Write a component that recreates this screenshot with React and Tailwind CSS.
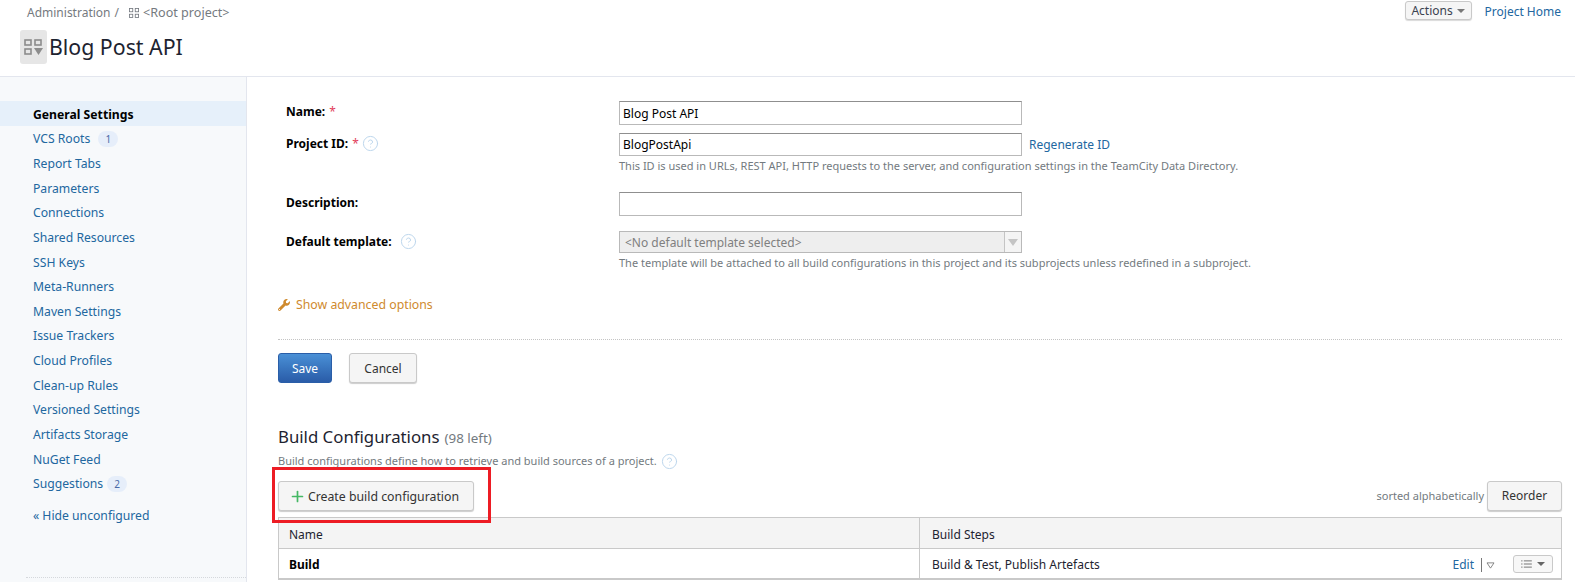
import { CircleHelp, Plus } from "lucide-react";
import { FaWrench } from "react-icons/fa";

const sidebarItems = [
    { label: "General Settings", active: true },
    { label: "VCS Roots", badge: 1, badgeGap: "ml-[8px]" },
    { label: "Report Tabs" },
    { label: "Parameters" },
    { label: "Connections" },
    { label: "Shared Resources" },
    { label: "SSH Keys" },
    { label: "Meta-Runners" },
    { label: "Maven Settings" },
    { label: "Issue Trackers" },
    { label: "Cloud Profiles" },
    { label: "Clean-up Rules" },
    { label: "Versioned Settings" },
    { label: "Artifacts Storage" },
    { label: "NuGet Feed" },
    { label: "Suggestions", badge: 2, badgeGap: "ml-[4px]" },
];

function ProjectIcon({ className }) {
    return (
        <svg viewBox="0 0 12 12" className={className} fill="none" stroke="currentColor" strokeWidth="1">
            <rect x="0.5" y="0.5" width="4" height="4" />
            <rect x="7.5" y="0.5" width="4" height="4" />
            <rect x="0.5" y="7.5" width="4" height="4" />
            <rect x="7.5" y="7.5" width="4" height="4" />
        </svg>
    );
}

function Help({ className = "" }) {
    return <CircleHelp size={17} strokeWidth={1.4} className={`text-[#bcd6ec] ${className}`} />;
}

function FormRow({ label, required, help, helpGap = "ml-[3px]", top, children }) {
    return (
        <div className={`flex ${top}`}>
            <div className="w-[341px] shrink-0 pl-[8px] pt-[2px] flex items-start h-[22px] font-bold text-black">
                <span>{label}:</span>
                {required && <span className="ml-1 font-normal text-[#e2405a]">*</span>}
                {help && <Help className={helpGap} />}
            </div>
            <div className="flex-1">{children}</div>
        </div>
    );
}

function GrayButton({ className = "", children }) {
    return (
        <button className={`flex items-center justify-center rounded-[3px] border border-[#c9c9c9] bg-[#f5f5f5] shadow-[0_1px_1px_rgba(0,0,0,0.2)] text-[#333] ${className}`}>
            {children}
        </button>
    );
}

export default function App() {
    return (
        <div className="w-[1575px] h-[582px] overflow-hidden bg-white text-[12px] leading-[18px] font-['Noto_Sans',sans-serif]">
            {/* Header */}
            <header className="h-[77px] border-b border-[#e3e6ee] flex justify-between">
                <div className="pl-[20px]">
                    <div className="flex items-center h-[25px] pl-[7px] text-[#757a80]">
                        <span>Administration</span>
                        <span className="ml-[4px]">/</span>
                        <ProjectIcon className="ml-[10px] w-[10px] h-[10px]" />
                        <span className="ml-[4px] text-[12.6px]">&lt;Root project&gt;</span>
                    </div>
                    <div className="flex items-center mt-[5px]">
                        <div className="w-[27px] h-[34px] rounded-[3px] bg-[#e6e6e6] flex items-center justify-center">
                            <svg viewBox="0 0 20 16" className="w-[20px] h-[16px] text-[#8c8c8c]" fill="none" stroke="currentColor" strokeWidth="1.6">
                                <rect x="1" y="1" width="6" height="5" />
                                <rect x="11" y="1" width="6" height="5" />
                                <rect x="1" y="10" width="6" height="5" />
                                <path d="M10 9h9l-4.5 7z" fill="currentColor" stroke="none" />
                            </svg>
                        </div>
                        <h1 className="ml-[2px] text-[21.3px] leading-[28px] text-[#1d2330]">Blog Post API</h1>
                    </div>
                </div>
                <div className="flex items-start pr-[14px] pt-[1px]">
                    <button className="flex items-center h-[19px] w-[67px] justify-center rounded-[3px] border border-[#c9c9c9] bg-[#f5f5f5] shadow-[0_1px_1px_rgba(0,0,0,0.15)] text-[#3a4250] pt-[1px]">
                        Actions
                        <span className="ml-[4px] w-0 h-0 border-x-[4px] border-x-transparent border-t-[4px] border-t-[#777]" />
                    </button>
                    <a className="ml-[13px] mt-[2px] text-[#22679f]">Project Home</a>
                </div>
            </header>

            <div className="flex h-[505px]">
                {/* Sidebar */}
                <aside className="w-[247px] shrink-0 bg-[#f7f9fb] border-r border-[#e3e6ee] pt-[24px] flex flex-col text-[12.2px] text-[#22679f]">
                    {sidebarItems.map((item) => (
                        <div
                            key={item.label}
                            className={`h-[24.64px] flex items-center pl-[33px] pt-[3px] ${item.active ? "bg-[#e6f0fa] font-bold text-black" : ""}`}
                        >
                            {item.label}
                            {item.badge && (
                                <span className={`${item.badgeGap} w-[20px] h-[16px] rounded-full bg-[#e6eefa] text-[10px] flex items-center justify-center text-[#4a6aa8]`}>
                                    {item.badge}
                                </span>
                            )}
                        </div>
                    ))}
                    <div className="mt-[12px] pl-[33px]">« Hide unconfigured</div>
                    <div className="mt-auto mb-[4px] ml-[26px] border-t border-dotted border-[#d5d8dc]" />
                </aside>

                {/* Main */}
                <main className="relative flex-1 pl-[31px] pr-[13px] text-[#1d2330]">
                    <section className="pt-[24px]">
                        <FormRow label="Name" required>
                            <input readOnly value="Blog Post API" className="block w-[403px] h-[24px] border border-[#b9b9b9] border-t-[#8f8f8f] pl-[3px] outline-none text-black" />
                        </FormRow>
                        <FormRow label="Project ID" required help top="mt-[8px]">
                            <div className="flex items-center">
                                <input readOnly value="BlogPostApi" className="block w-[403px] h-[23px] border border-[#b9b9b9] border-t-[#8f8f8f] pl-[3px] outline-none text-black" />
                                <a className="ml-[7px] pt-[1px] text-[#22679f]">Regenerate ID</a>
                            </div>
                            <p className="mt-[1px] text-[11px] leading-[18px] text-[#737a80]">
                                This ID is used in URLs, REST API, HTTP requests to the server, and configuration settings in the TeamCity Data Directory.
                            </p>
                        </FormRow>
                        <FormRow label="Description" top="mt-[17px]">
                            <input readOnly className="block w-[403px] h-[24px] border border-[#b9b9b9] border-t-[#8f8f8f] outline-none" />
                        </FormRow>
                        <FormRow label="Default template" help helpGap="ml-[8px]" top="mt-[15px]">
                            <div className="flex w-[403px] h-[22px] border border-[#b9b9b9] bg-[#eeeeee] text-[#808080] items-center">
                                <span className="flex-1 pl-[5px] pt-[2px]">&lt;No default template selected&gt;</span>
                                <span className="w-[17px] h-full border-l border-[#c4c4c4] bg-[#f4f4f4] flex items-center justify-center">
                                    <span className="w-0 h-0 border-x-[5px] border-x-transparent border-t-[7px] border-t-[#c4c4c4]" />
                                </span>
                            </div>
                            <p className="mt-[1px] text-[11px] leading-[18px] text-[#737a80]">
                                The template will be attached to all build configurations in this project and its subprojects unless redefined in a subproject.
                            </p>
                        </FormRow>
                    </section>

                    <div className="mt-[24px] flex items-center text-[12.3px] text-[#cf8a2e]">
                        <FaWrench size={12} />
                        <span className="ml-[6px]">Show advanced options</span>
                    </div>

                    <div className="mt-[25px] border-t border-dotted border-[#c4c4c4]" />

                    <div className="mt-[13px] flex">
                        <button className="w-[54px] h-[30px] pt-[1px] rounded-[3px] border border-[#2a5ea8] bg-gradient-to-b from-[#4a90d6] to-[#2a5ca8] text-white">
                            Save
                        </button>
                        <GrayButton className="ml-[17px] w-[68px] h-[30px] pt-[1px]">Cancel</GrayButton>
                    </div>

                    <h2 className="mt-[41px] h-[26px] flex items-baseline text-[16.8px] leading-[26px] text-[#1d2330]">
                        Build Configurations
                        <span className="ml-[5px] text-[13.4px] text-[#737a80]">(98 left)</span>
                    </h2>
                    <p className="mt-[2px] flex items-center text-[11px] leading-[18px] text-[#737a80]">
                        Build configurations define how to retrieve and build sources of a project.
                        <Help className="ml-[4px]" />
                    </p>

                    <div className="mt-[11px] flex items-center justify-between">
                        <GrayButton className="w-[196px] h-[30px] text-[12.3px] pt-[1px] pr-[4px]">
                            <Plus size={17} strokeWidth={2.4} className="text-[#45b864] mr-[2px]" />
                            Create build configuration
                        </GrayButton>
                        <div className="flex items-center">
                            <span className="text-[11px] text-[#737a80]">sorted alphabetically</span>
                            <GrayButton className="ml-[3px] w-[75px] h-[30px]">Reorder</GrayButton>
                        </div>
                    </div>

                    <div className="mt-[6px] border border-[#c9c9c9]">
                        <div className="flex h-[31px] items-center bg-[#f4f4f4] border-b border-[#c9c9c9]">
                            <div className="w-[641px] h-full flex items-center pl-[10px] pt-[3px] border-r border-[#c9c9c9]">Name</div>
                            <div className="pl-[12px] pt-[3px]">Build Steps</div>
                        </div>
                        <div className="flex h-[30px] items-center border-b border-[#c9c9c9]">
                            <div className="w-[641px] h-full flex items-center pl-[10px] pt-[3px] font-bold text-black border-r border-[#c9c9c9]">Build</div>
                            <div className="pl-[12px] pt-[3px] flex-1">Build &amp; Test, Publish Artefacts</div>
                            <a className="pt-[3px] text-[#22679f]">Edit</a>
                            <span className="ml-[7px] mt-[3px] h-[14px] border-l border-[#777]" />
                            <svg viewBox="0 0 10 8" className="ml-[4px] mt-[3px] w-[9px] h-[7px] text-[#777]" fill="none" stroke="currentColor">
                                <path d="M1 1h8L5 7z" />
                            </svg>
                            <button className="ml-[18px] mr-[8px] w-[40px] h-[18px] rounded-[3px] border border-[#c9c9c9] bg-[#f7f7f7] flex items-center justify-center">
                                <svg viewBox="0 0 12 9" className="w-[11px] h-[8px] text-[#666]" fill="none" stroke="currentColor">
                                    <path d="M0 1h1.5M3 1h9M0 4.5h1.5M3 4.5h9M0 8h1.5M3 8h9" />
                                </svg>
                                <span className="ml-[5px] w-0 h-0 border-x-[4px] border-x-transparent border-t-[4px] border-t-[#666]" />
                            </button>
                        </div>
                    </div>

                    {/* Annotation round the create button */}
                    <div className="absolute left-[25px] top-[390px] w-[219px] h-[56px] border-[3px] border-[#ed1c24] pointer-events-none" />
                </main>
            </div>
        </div>
    );
}
